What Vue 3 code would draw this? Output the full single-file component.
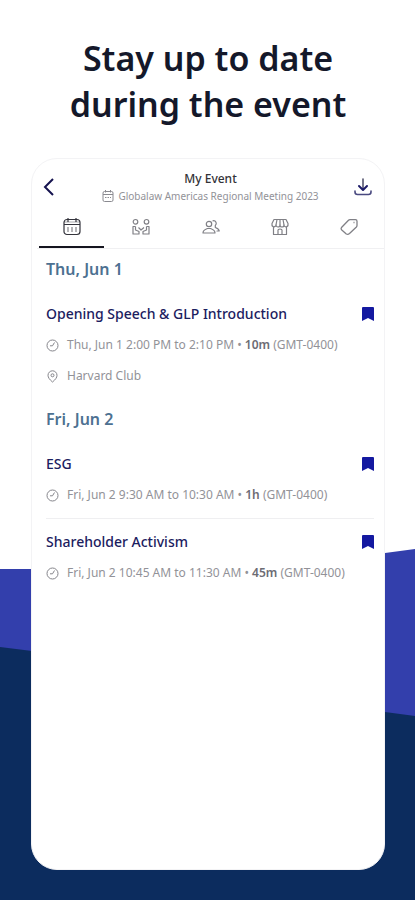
<script setup>
import { ref } from 'vue'

const activeTab = ref('Agenda')
const tabs = ['Agenda', 'Meetings', 'People', 'Exhibitors', 'Offers']

const days = [
  {
    label: 'Thu, Jun 1',
    sessions: [
      {
        title: 'Opening Speech & GLP Introduction',
        time: 'Thu, Jun 1 2:00 PM to 2:10 PM',
        length: '10m',
        place: 'Harvard Club',
      },
    ],
  },
  {
    label: 'Fri, Jun 2',
    sessions: [
      { title: 'ESG', time: 'Fri, Jun 2 9:30 AM to 10:30 AM', length: '1h' },
      { title: 'Shareholder Activism', time: 'Fri, Jun 2 10:45 AM to 11:30 AM', length: '45m' },
    ],
  },
]
</script>

<template>
  <main class="page">
    <svg class="backdrop" viewBox="0 0 415 900" preserveAspectRatio="none" aria-hidden="true">
      <path d="M0 569H200L385 553L415 549V900H0Z" fill="#333fac" />
      <path d="M0 647L32 651L200 690L385 712L415 716V900H0Z" fill="#0c2c5e" />
    </svg>

    <h1 class="headline">Stay up to date<br />during the event</h1>

    <section class="card">
      <header class="top">
        <button class="icon-button" type="button" aria-label="Back">
          <svg width="12" height="20" viewBox="0 0 12 20">
            <path d="M10 2L2 10L10 18" fill="none" stroke="#15134f" stroke-width="2" />
          </svg>
        </button>
        <div class="heading">
          <h2 class="title">My Event</h2>
          <p class="subtitle">
            <svg width="12" height="12" viewBox="0 0 12 12" fill="none" stroke="#8a8a90">
              <rect x="1" y="1.5" width="10" height="10" rx="1.5" />
              <path d="M1 4.5H11M3.5 0V2.5M8.5 0V2.5" />
              <path d="M3 7.5H9" stroke-dasharray="1.5 1" />
            </svg>
            <span>Globalaw Americas Regional Meeting 2023</span>
          </p>
        </div>
        <button class="icon-button" type="button" aria-label="Download">
          <svg width="18" height="18" viewBox="0 0 18 18" fill="none" stroke="#1c1b68" stroke-width="1.6" stroke-linecap="round" stroke-linejoin="round">
            <path d="M9 1V11" stroke="#55556f" />
            <path d="M5 8L9 12L13 8" stroke-width="2" />
            <path d="M1 13V14Q1 16.500 3.500 16.500H14.500Q17 16.500 17 14V13" stroke="#4a4a80" />
          </svg>
        </button>
      </header>

      <nav class="tabs">
        <button
          v-for="tab in tabs"
          :key="tab"
          class="tab"
          :class="{ active: tab === activeTab }"
          type="button"
          :aria-label="tab"
          @click="activeTab = tab"
        >
          <svg v-if="tab === 'Agenda'" width="18" height="18" viewBox="0 0 18 18" fill="none" stroke="currentColor" stroke-width="1.2">
            <rect x="1" y="1.500" width="16" height="15" rx="3" />
            <path d="M1 6.500H17M5 0V4M13 0V4" />
            <path d="M1.500 4H16.500" opacity=".35" />
            <path d="M5 9V14M9 9V14M13 9V14" opacity=".6" />
          </svg>
          <svg v-else-if="tab === 'Meetings'" width="18" height="18" viewBox="0 0 18 18" fill="none" stroke="currentColor" stroke-width="1.2" stroke-linejoin="round">
            <circle cx="3.500" cy="3.800" r="2.300" />
            <circle cx="14.500" cy="3.800" r="2.300" />
            <path d="M3.500 8.500H1V16H7V13.500L3.500 12V8.500" />
            <path d="M14.500 8.500H17V16H11V13.500L14.500 12V8.500" />
            <path d="M6.500 9.500L9 12L12 9.500" />
          </svg>
          <svg v-else-if="tab === 'People'" width="18" height="18" viewBox="0 0 18 18" fill="none" stroke="currentColor" stroke-width="1.2" stroke-linejoin="round" stroke-linecap="round">
            <circle cx="7" cy="6" r="2.700" />
            <path d="M1 15C1 12 3 11.500 5.500 10.500H8.500C11 11.500 13 12 13 15Z" />
            <path d="M11 2.800A2.700 2.700 0 0 1 13.300 7.500V9.500C16 10.500 17.200 11 17.200 13H15" />
          </svg>
          <svg v-else-if="tab === 'Exhibitors'" width="18" height="18" viewBox="0 0 18 18" fill="none" stroke="currentColor" stroke-width="1.2" stroke-linejoin="round">
            <path d="M3 1.500H15L17 5.500V6.500A2 2 0 0 1 13 7A2 2 0 0 1 9 7A2 2 0 0 1 5 7A2 2 0 0 1 1 6.500V5.500Z" />
            <path d="M6 1.500L5 7M12 1.500L13 7M9 1.500V7M2.500 9V16.500H15.500V9M7 16.500V12Q7 11 9 11T11 12V16.500" />
          </svg>
          <svg v-else width="18" height="18" viewBox="0 0 18 18" fill="none" stroke="currentColor" stroke-width="1.300" stroke-linejoin="round">
            <path d="M8.500 2.200Q9 1.700 10 1.700H15.500Q17 1.700 17 3.200V7.500Q17 8.400 16.400 9L9.500 15.500Q8 16.800 6.300 16L1.800 12Q.6 10.800 1.500 9.500Z" />
            <path d="M13.500 4.500H14.500" />
          </svg>
        </button>
      </nav>

      <section v-for="day in days" :key="day.label" class="day">
        <h3 class="day-label">{{ day.label }}</h3>
        <article v-for="session in day.sessions" :key="session.title" class="session">
          <div class="session-head">
            <h4 class="session-title">{{ session.title }}</h4>
            <button class="icon-button" type="button" aria-label="Remove bookmark">
              <svg width="12" height="14" viewBox="0 0 12 14">
                <path d="M0 1Q0 0 1 0H11Q12 0 12 1V14L6 11L0 14Z" fill="#1419a0" />
              </svg>
            </button>
          </div>
          <p class="detail">
            <svg width="13" height="13" viewBox="0 0 13 13" fill="none" stroke="#85858b">
              <circle cx="6.500" cy="6.500" r="5.500" />
              <path d="M8.500 3.500L6.500 6.800H4" />
            </svg>
            <span>{{ session.time }} • <b>{{ session.length }}</b> (GMT-0400)</span>
          </p>
          <p v-if="session.place" class="detail">
            <svg width="13" height="13" viewBox="0 0 13 13" fill="none" stroke="#85858b">
              <path d="M6.500 12C3.500 9.500 2 7.500 2 5.300A4.500 4.500 0 0 1 11 5.300C11 7.500 9.500 9.500 6.500 12Z" />
              <circle cx="6.500" cy="5.300" r="1.500" />
            </svg>
            <span>{{ session.place }}</span>
          </p>
        </article>
      </section>
    </section>
  </main>
</template>

<style>
body {
  margin: 0;
  background: #fff;
}
</style>

<style scoped>
.page {
  position: relative;
  box-sizing: border-box;
  min-height: 100vh;
  display: flex;
  flex-direction: column;
  padding: 35px 30px 30px 31px;
  font-family: "Noto Sans", "Open Sans", sans-serif;
}

.backdrop {
  position: absolute;
  inset: 0;
  width: 100%;
  height: 100%;
}

h1,
h2,
h3,
h4,
p {
  margin: 0;
}

.headline {
  position: relative;
  margin-bottom: 31px;
  font-size: 34px;
  line-height: 46px;
  font-weight: 600;
  text-align: center;
  color: #14182a;
}

.card {
  position: relative;
  flex: 1;
  box-sizing: border-box;
  border: 1px solid #f3f3f5;
  border-radius: 26px;
  background: #fff;
}

.icon-button {
  display: flex;
  padding: 0;
  border: 0;
  background: none;
  cursor: pointer;
}

.top {
  display: grid;
  grid-template-columns: 18px 1fr 18px;
  align-items: center;
  padding: 11px 12px 0 11px;
}

.heading {
  display: flex;
  flex-direction: column;
  align-items: center;
  padding-left: 6px;
}

.title {
  font-size: 12px;
  line-height: 18px;
  font-weight: 500;
  color: #333338;
}

.subtitle {
  display: flex;
  align-items: center;
  gap: 4px;
  font-size: 10px;
  line-height: 16px;
  color: #929298;
}

.tabs {
  display: flex;
  margin: 4px 0 0 5px;
  border-bottom: 1px solid #f0f0f2;
}

.tab {
  flex: 1;
  display: flex;
  justify-content: center;
  margin: 0 2px;
  padding: 10px 0;
  border: 0;
  border-bottom: 2px solid transparent;
  background: none;
  color: #808086;
  cursor: pointer;
}

.tab.active {
  border-bottom-color: #15151f;
  color: #34343c;
}

.day {
  padding: 0 10px 0 14px;
}

.day-label {
  padding-top: 9px;
  font-size: 16px;
  line-height: 22px;
  font-weight: 600;
  color: #4d7191;
}

.session {
  padding: 13px 0;
}

.session + .session {
  border-top: 1px solid #efeff1;
}

.session-head {
  display: flex;
  align-items: center;
  justify-content: space-between;
  line-height: 20px;
}

.day-label + .session {
  padding-top: 24px;
}

.session-title {
  font-size: 14px;
  font-weight: 500;
  color: #1b2060;
}

.detail {
  display: flex;
  align-items: center;
  gap: 8px;
  padding-top: 11px;
  font-size: 12px;
  line-height: 20px;
  color: #929298;
}

.detail b {
  font-weight: 600;
  color: #6c6c74;
}
</style>
